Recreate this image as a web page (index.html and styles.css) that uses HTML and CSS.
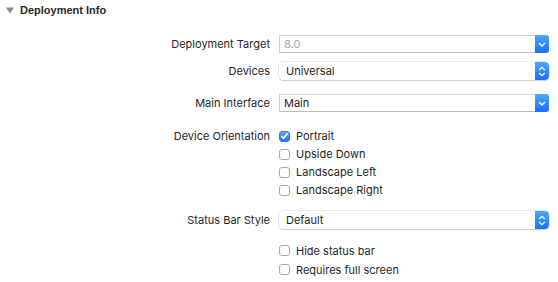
FILE: index.html
```html
<!DOCTYPE html>
<html>
<head>
<meta charset="utf-8">
<link rel="stylesheet" href="styles.css">
</head>
<body>
<div class="panel">
  <div class="header">
    <svg class="disclosure" width="8" height="7" viewBox="0 0 8 7"><path d="M0 0.5 L8 0.5 L4 6.5 Z" fill="#8a8a8a"/></svg>
    <span class="title">Deployment Info</span>
  </div>
  <div class="form">
    <div class="label r1">Deployment Target</div>
    <div class="combo r1">
      <div class="combo-field placeholder">8.0</div>
      <div class="btn sq"><svg width="8" height="5" viewBox="0 0 8 5"><path d="M1 1 L4 4 L7 1" fill="none" stroke="#fff" stroke-width="1.4"/></svg></div>
    </div>

    <div class="label r2">Devices</div>
    <div class="popup r2">
      <div class="popup-text">Universal</div>
      <div class="btn rd"><svg width="8" height="11" viewBox="0 0 8 11"><path d="M1.2 4 L4 1.3 L6.8 4 M1.2 7 L4 9.7 L6.8 7" fill="none" stroke="#fff" stroke-width="1.3"/></svg></div>
    </div>

    <div class="label r3">Main Interface</div>
    <div class="combo r3">
      <div class="combo-field">Main</div>
      <div class="btn sq"><svg width="8" height="5" viewBox="0 0 8 5"><path d="M1 1 L4 4 L7 1" fill="none" stroke="#fff" stroke-width="1.4"/></svg></div>
    </div>

    <div class="label r4">Device Orientation</div>
    <div class="checks r4">
      <div class="check"><span class="box on"><svg width="9" height="8" viewBox="0 0 9 8"><path d="M1.5 4.2 L3.6 6.3 L7.6 1.2" fill="none" stroke="#fff" stroke-width="1.5"/></svg></span>Portrait</div>
      <div class="check"><span class="box"></span>Upside Down</div>
      <div class="check"><span class="box"></span>Landscape Left</div>
      <div class="check"><span class="box"></span>Landscape Right</div>
    </div>

    <div class="label r5">Status Bar Style</div>
    <div class="popup r5">
      <div class="popup-text">Default</div>
      <div class="btn rd"><svg width="8" height="11" viewBox="0 0 8 11"><path d="M1.2 4 L4 1.3 L6.8 4 M1.2 7 L4 9.7 L6.8 7" fill="none" stroke="#fff" stroke-width="1.3"/></svg></div>
    </div>

    <div class="label r6"></div>
    <div class="checks r6">
      <div class="check tall"><span class="box"></span>Hide status bar</div>
      <div class="check tall"><span class="box"></span>Requires full screen</div>
    </div>
  </div>
</div>
</body>
</html>
```
FILE: styles.css
```css
html, body {
  margin: 0;
  padding: 0;
  background: #ffffff;
}
body {
  width: 558px;
  height: 282px;
  overflow: hidden;
  font-family: "Inter", "Liberation Sans", sans-serif;
  font-size: 11px;
  color: #262626;
}
.header {
  display: flex;
  align-items: center;
  height: 20px;
  padding-left: 6px;
}
.disclosure {
  margin-right: 6px;
}
.title {
  font-family: "Liberation Sans", sans-serif;
  font-weight: bold;
  font-size: 11px;
  color: #2a2a2a;
}
.form {
  display: grid;
  grid-template-columns: 270px 270px;
  column-gap: 9px;
  align-items: start;
}
.label {
  text-align: right;
  line-height: 18px;
}
.r1 { margin-top: 15px; }
.r2 { margin-top: 9px; }
.r3 { margin-top: 14px; }
.r4 { margin-top: 15px; }
.r5 { margin-top: 12px; }
.r6 { margin-top: 12px; }
.r4.label { line-height: 18px; }

.combo {
  display: flex;
  height: 18px;
}
.combo-field {
  flex: 1;
  box-sizing: border-box;
  height: 18px;
  border: 1px solid #cfcfcf;
  border-right: none;
  border-bottom-color: #bdbdbd;
  padding-left: 4px;
  line-height: 16px;
  color: #1e1e1e;
}
.combo-field.placeholder {
  color: #a8a8a8;
}
.btn {
  width: 14px;
  height: 18px;
  display: flex;
  align-items: center;
  justify-content: center;
  background: linear-gradient(#4ea6ff, #1670fb);
}
.btn.sq {
  border-radius: 0 3px 3px 0;
}
.popup {
  display: flex;
  height: 18px;
  box-sizing: border-box;
  border-radius: 4px;
  box-shadow: 0 0 0 0.5px rgba(0,0,0,0.18), 0 1px 1px rgba(0,0,0,0.12);
  background: #fff;
  overflow: hidden;
}
.popup-text {
  flex: 1;
  padding-left: 7px;
  line-height: 18px;
  color: #1e1e1e;
}
.btn.rd {
  border-radius: 0 4px 4px 0;
}
.checks {
  display: flex;
  flex-direction: column;
}
.check {
  display: flex;
  align-items: center;
  height: 18px;
  color: #262626;
}
.check.tall {
  height: 19px;
}
.box {
  box-sizing: border-box;
  width: 11px;
  height: 11px;
  border: 1px solid #a9a9a9;
  border-radius: 3px;
  background: #fff;
  margin-right: 6px;
  display: flex;
  align-items: center;
  justify-content: center;
}
.box.on {
  border-color: #2b7cf0;
  background: linear-gradient(#5aa8ff, #2276f6);
}
```
